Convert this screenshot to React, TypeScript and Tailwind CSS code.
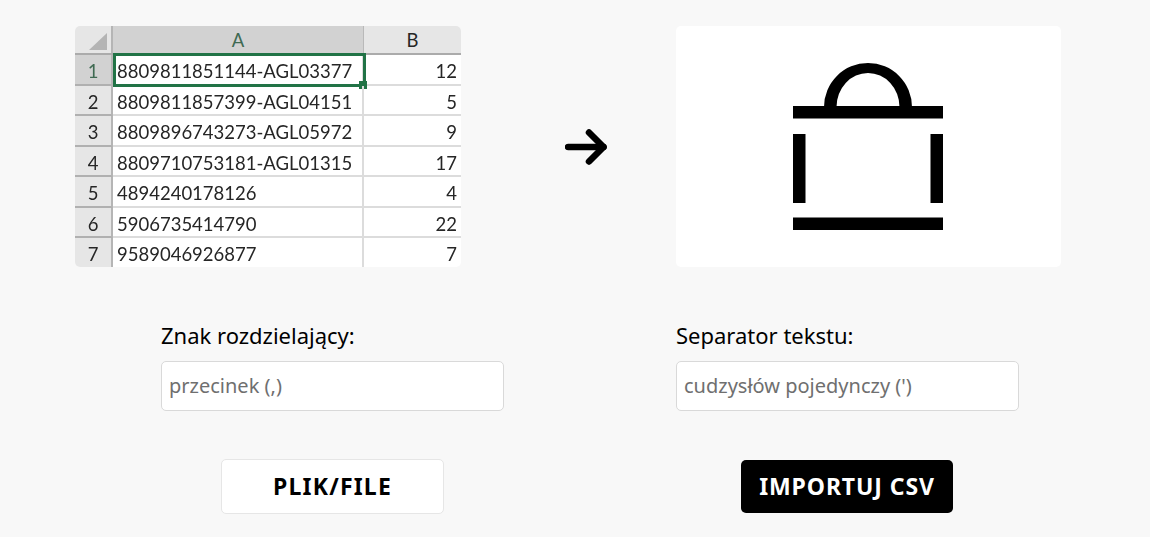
const rows = [
  ['1', '8809811851144-AGL03377', '12'],
  ['2', '8809811857399-AGL04151', '5'],
  ['3', '8809896743273-AGL05972', '9'],
  ['4', '8809710753181-AGL01315', '17'],
  ['5', '4894240178126', '4'],
  ['6', '5906735414790', '22'],
  ['7', '9589046926877', '7'],
];

function Sheet() {
  return (
    <div className="w-[386px] h-[241px] rounded-[5px] overflow-hidden bg-white font-['Lato',sans-serif] text-[18.500px] text-[#262626] leading-none">
      <div className="blur-[0.3px]">
        <div className="flex h-[29px] border-b-2 border-[#ababab]">
          <div className="w-[38px] bg-[#e6e6e6] border-r-2 border-[#b5b5b5] flex items-end justify-end pr-[4px] pb-[3px]">
            <div className="w-0 h-0 border-l-[18px] border-l-transparent border-b-[17px] border-b-[#b4b4b4]" />
          </div>
          <div className="w-[251px] bg-[#d2d2d2] border-r border-[#b9b9b9] flex items-center justify-center pt-[2px] text-[#3f6a52]">A</div>
          <div className="flex-1 bg-[#e6e6e6] flex items-center justify-center pt-[2px]">B</div>
        </div>
        {rows.map((row, i) => (
          <div key={row[0]} className="relative flex h-[30.500px] border-b-2 border-[#dcdcdc]">
            <div className={`w-[38px] border-r-2 border-b-2 -mb-[2px] border-r-[#b5b5b5] border-b-[#b0b0b0] flex items-center justify-center pt-[4px] ${i === 0 ? 'bg-[#d2d2d2] text-[#3f6a52]' : 'bg-[#e6e6e6]'}`}>
              {row[0]}
            </div>
            <div className="w-[251px] border-r-2 border-[#dcdcdc] flex items-center pl-[4px] pt-[4px]">{row[1]}</div>
            <div className="flex-1 flex items-center justify-end pr-[4px] pt-[4px]">{row[2]}</div>
            {i === 0 && (
              <>
                <div className="absolute left-[38px] -top-[2px] w-[253px] h-[34px] border-[3px] border-[#217346]" />
                <div className="absolute left-[284px] top-[26px] w-[8px] h-[8px] bg-[#217346]" />
              </>
            )}
          </div>
        ))}
      </div>
    </div>
  );
}

function BagIcon() {
  return (
    <svg width="150" height="167" viewBox="0 0 150 167" fill="#000">
      <path d="M31 44 A44 44 0 0 1 119 44 H106.500 A31.500 34 0 0 0 43.500 44 Z" />
      <rect x="0" y="43" width="150" height="12.500" />
      <rect x="0" y="71" width="12.500" height="69" />
      <rect x="137.500" y="71" width="12.500" height="69" />
      <rect x="0" y="154.500" width="150" height="12.500" />
    </svg>
  );
}

function Field({ label, value }: { label: string; value: string }) {
  return (
    <div className="w-[343px]">
      <label className="block text-[22px] leading-[30px] text-black mb-[11px] -mt-[1px]">{label}</label>
      <div className="h-[50px] bg-white border border-[#d9d9d9] rounded-[5px] flex items-center px-[7px] text-[20px] text-[#6f6f6f]">
        {value}
      </div>
    </div>
  );
}

export default function App() {
  return (
    <div className="w-[1150px] h-[537px] bg-[#f8f8f8] font-['Noto_Sans',sans-serif] overflow-hidden pt-[26px]">
      <div className="flex items-center pl-[75px]">
        <Sheet />
        <div className="w-[215px] flex justify-center pl-[34px]">
          <svg width="42" height="36" viewBox="0 0 42 36" fill="none" stroke="#000" strokeWidth="6.500" strokeLinecap="round" strokeLinejoin="round">
            <path d="M3 18 H38.500" />
            <path d="M24 3.500 L38.500 18 L24 32.500" />
          </svg>
        </div>
        <div className="w-[385px] h-[241px] bg-white rounded-[5px] flex items-center justify-center pr-[1px]">
          <BagIcon />
        </div>
      </div>

      <div className="flex gap-[172px] pl-[161px] mt-[54px]">
        <Field label="Znak rozdzielający:" value="przecinek (,)" />
        <Field label="Separator tekstu:" value="cudzysłów pojedynczy (')" />
      </div>

      <div className="flex pl-[221px] mt-[48px] items-center">
        <button className="w-[223px] h-[55px] bg-white border border-[#e6e6e6] rounded-[5px] text-[23px] font-bold tracking-[1.200px] text-black">
          PLIK/FILE
        </button>
        <button className="ml-[297px] w-[212px] h-[53px] bg-black rounded-[5px] text-[23px] font-bold tracking-[0.900px] text-white">
          IMPORTUJ CSV
        </button>
      </div>
    </div>
  );
}
